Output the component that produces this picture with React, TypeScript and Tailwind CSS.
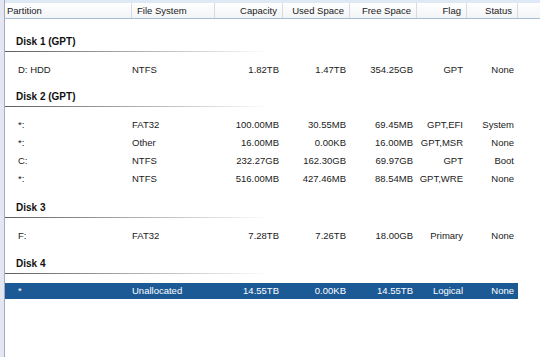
import React from "react";

type Row = { p: string; fs: string; cap: string; used: string; free: string; flag: string; status: string; sel?: boolean };
type Group = { name: string; rows: Row[]; mt: string };

const groups: Group[] = [
  { name: "Disk 1 (GPT)", mt: "mt-[16px]", rows: [{ p: "D: HDD", fs: "NTFS", cap: "1.82TB", used: "1.47TB", free: "354.25GB", flag: "GPT", status: "None" }] },
  {
    name: "Disk 2 (GPT)",
    mt: "mt-[11px]",
    rows: [
      { p: "*:", fs: "FAT32", cap: "100.00MB", used: "30.55MB", free: "69.45MB", flag: "GPT,EFI", status: "System" },
      { p: "*:", fs: "Other", cap: "16.00MB", used: "0.00KB", free: "16.00MB", flag: "GPT,MSR", status: "None" },
      { p: "C:", fs: "NTFS", cap: "232.27GB", used: "162.30GB", free: "69.97GB", flag: "GPT", status: "Boot" },
      { p: "*:", fs: "NTFS", cap: "516.00MB", used: "427.46MB", free: "88.54MB", flag: "GPT,WRE", status: "None" },
    ],
  },
  { name: "Disk 3", mt: "mt-[13px]", rows: [{ p: "F:", fs: "FAT32", cap: "7.28TB", used: "7.26TB", free: "18.00GB", flag: "Primary", status: "None" }] },
  { name: "Disk 4", mt: "mt-[12px]", rows: [{ p: "*", fs: "Unallocated", cap: "14.55TB", used: "0.00KB", free: "14.55TB", flag: "Logical", status: "None", sel: true }] },
];

function HeaderCell({ w, children, right }: { w: string; children: React.ReactNode; right?: boolean }) {
  return (
    <div className={`${w} h-full flex items-center border-r border-[#d6dbe3] ${right ? "justify-end pr-[5px]" : "pl-[5px]"}`}>
      {children}
    </div>
  );
}

function DataRow({ r }: { r: Row }) {
  const base = r.sel ? "bg-[#1c5a96] text-white h-[16px]" : "text-[#1a1a1a] h-[18px]";
  return (
    <div className={`flex items-center w-[513px] ${base}`}>
      <div className="w-[127px] pl-[13px]">{r.p}</div>
      <div className="w-[83px]">{r.fs}</div>
      <div className="w-[68px] text-right pr-[4px]">{r.cap}</div>
      <div className="w-[67px] text-right pr-[4px]">{r.used}</div>
      <div className="w-[67px] text-right pr-[4px]">{r.free}</div>
      <div className="w-[50px] text-right pr-[4px]">{r.flag}</div>
      <div className="w-[51px] text-right pr-[4px]">{r.status}</div>
    </div>
  );
}

export default function App() {
  return (
    <div
      className="w-[540px] h-[357px] bg-white flex overflow-hidden text-[9.5px] leading-[14px]"
      style={{ fontFamily: '"Liberation Sans", Arial, sans-serif' }}
    >
      <div className="w-[5px] h-full bg-[#e4e6f1] border-r border-[#a3aac4]" />
      <div className="flex-1 flex flex-col">
        <div className="h-[3px] bg-[#dfe8f5]" />
        <div className="h-[16px] flex border-b border-[#a9bdd6] bg-gradient-to-b from-white to-[#f3f4f6] text-[#1a1a1a]">
          <HeaderCell w="w-[127px]">
            <span className="-ml-[3px]">Partition</span>
          </HeaderCell>
          <HeaderCell w="w-[83px]">File System</HeaderCell>
          <HeaderCell w="w-[68px]" right>Capacity</HeaderCell>
          <HeaderCell w="w-[67px]" right>Used Space</HeaderCell>
          <HeaderCell w="w-[67px]" right>Free Space</HeaderCell>
          <HeaderCell w="w-[50px]" right>Flag</HeaderCell>
          <HeaderCell w="w-[51px]" right>Status</HeaderCell>
        </div>
        {groups.map((g) => (
          <div key={g.name} className={`flex flex-col ${g.mt}`}>
            <div className="pl-[11px] font-bold text-[#111] text-[10px]">{g.name}</div>
            <div className="mt-[2px] h-[1px] w-[265px] bg-gradient-to-r from-[#5e5e5e] via-[#b0b0b0] to-white" />
            <div className={g.rows[0].sel ? "mt-[9px]" : "mt-[9px]"}>
              {g.rows.map((r, i) => (
                <DataRow key={i} r={r} />
              ))}
            </div>
          </div>
        ))}
      </div>
    </div>
  );
}
